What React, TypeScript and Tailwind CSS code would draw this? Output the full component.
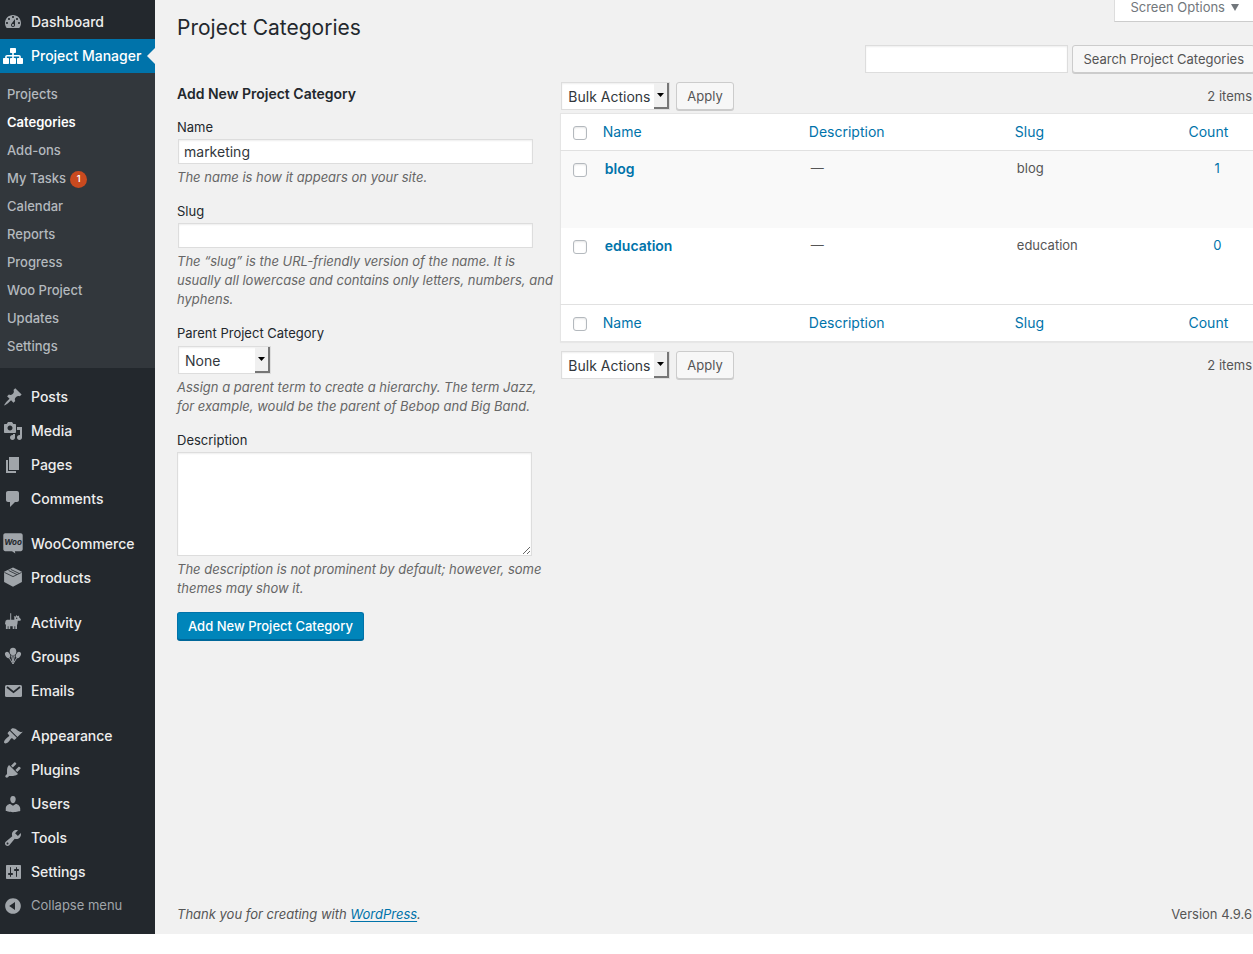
import { useState } from 'react'
import type { ReactNode } from 'react'
import clsx from 'clsx'

const SUBMENU = [
  { label: 'Projects' },
  { label: 'Categories', current: true },
  { label: 'Add-ons' },
  { label: 'My Tasks', badge: 1 },
  { label: 'Calendar' },
  { label: 'Reports' },
  { label: 'Progress' },
  { label: 'Woo Project' },
  { label: 'Updates' },
  { label: 'Settings' },
]

const ICONS: Record<string, ReactNode> = {
  dashboard: (
    <path d="M3.76 16h12.48c1.1-1.37 1.76-3.11 1.76-5 0-4.42-3.58-8-8-8s-8 3.58-8 8c0 1.89.66 3.63 1.76 5zM10 4c.55 0 1 .45 1 1s-.45 1-1 1-1-.45-1-1 .45-1 1-1zM6 6c.55 0 1 .45 1 1s-.45 1-1 1-1-.45-1-1 .45-1 1-1zm8 0c.55 0 1 .45 1 1s-.45 1-1 1-1-.45-1-1 .45-1 1-1zm-5.37 5.55L12 7v6c0 1.1-.9 2-2 2s-2-.9-2-2c0-.57.24-1.08.63-1.45zM4 10c.55 0 1 .45 1 1s-.45 1-1 1-1-.45-1-1 .45-1 1-1zm12 0c.55 0 1 .45 1 1s-.45 1-1 1-1-.45-1-1 .45-1 1-1zm-5 3c0-.55-.45-1-1-1s-1 .45-1 1 .45 1 1 1 1-.45 1-1z" />
  ),
  sitemap: (
    <path d="M8 2h4c.6 0 1 .4 1 1v3c0 .6-.4 1-1 1h-1.200v2H16c1 0 1.800.8 1.800 1.800V12H19c.6 0 1 .4 1 1v4c0 .6-.4 1-1 1h-4c-.6 0-1-.4-1-1v-4c0-.6.4-1 1-1h1.200v-1.400h-5.400V12H12c.6 0 1 .4 1 1v4c0 .6-.4 1-1 1H8c-.6 0-1-.4-1-1v-4c0-.6.4-1 1-1h1.200v-1.400H3.800V12H5c.6 0 1 .4 1 1v4c0 .6-.4 1-1 1H1c-.6 0-1-.4-1-1v-4c0-.6.4-1 1-1h1.200v-1.200C2.200 9.800 3 9 4 9h5.200V7H8c-.6 0-1-.4-1-1V3c0-.6.4-1 1-1z" />
  ),
  posts: (
    <path d="M10.44 3.02l1.82-1.82 6.36 6.35-1.83 1.82c-1.05-.68-2.48-.57-3.41.36l-.75.75c-.92.93-1.04 2.35-.35 3.41l-1.83 1.82-2.41-2.41-2.8 2.79c-.42.42-3.38 2.71-3.8 2.29s1.86-3.39 2.28-3.81l2.79-2.79L4.1 9.36l1.83-1.82c1.05.69 2.48.57 3.4-.36l.75-.75c.93-.92 1.05-2.35.36-3.41z" />
  ),
  media: (
    <path d="M13 11V4c0-.55-.45-1-1-1h-1.67L9 1H5L3.67 3H2c-.55 0-1 .45-1 1v7c0 .55.45 1 1 1h10c.55 0 1-.45 1-1zM7 4.5c1.38 0 2.5 1.12 2.5 2.5S8.38 9.5 7 9.5 4.5 8.38 4.5 7 5.62 4.5 7 4.5zM14 6h5v10.5c0 1.38-1.12 2.5-2.5 2.5S14 17.88 14 16.5s1.12-2.5 2.5-2.5c.17 0 .34.02.5.05V9h-3V6zm-4 8.05V13h2v3.5c0 1.38-1.12 2.5-2.5 2.5S7 17.88 7 16.5 8.12 14 9.5 14c.17 0 .34.02.5.05z" />
  ),
  pages: <path d="M6 15V2h10v13H6zm-1 1h8v2H3V5h2v11z" />,
  comments: (
    <path d="M5 2h9c1.1 0 2 .9 2 2v7c0 1.1-.9 2-2 2h-2l-5 5v-5H5c-1.1 0-2-.9-2-2V4c0-1.1.9-2 2-2z" />
  ),
  woo: (
    <>
      <path d="M2.200-.700h15.600c1 0 1.900.8 1.900 1.900v14.100c0 1-.9 1.900-1.900 1.900h-5.900l.4 2.200-3.300-2.200H2.200c-1 0-1.900-.9-1.900-1.900V1.200C.3.1 1.200-.7 2.200-.700z" />
      <text
        x="10"
        y="11"
        textAnchor="middle"
        className="fill-[#23282d] font-['Inter',sans-serif] text-[8px] font-bold italic"
      >
        Woo
      </text>
    </>
  ),
  products: (
    <>
      <path d="M10-.600l8.900 4.300v10.200L10 18.700 1.100 13.900V3.700z" />
      <path
        d="M1.400 4.400L10 8.600l8.600-4.200M5.600 2.500L14 6.600M7.800 1.400l8.400 4.100"
        className="fill-none stroke-[#23282d]"
        strokeWidth="0.8"
      />
    </>
  ),
  activity: (
    <path d="M7.200.2h1v6.500h3.100V4.600L10.800 3l1.700.8.8-1.800 1.200 1.300 1.600-.7v1.600l1.800 2-.5 1.600h-2.600l-.4 3.400-.4.800V16h-1.700v-2.700h-.9V16H9.700v-2.700H7.200V16H5.500v-2.700h-.8V16H2.900v-4L2 10.800l.6-3L4 6.700h3.200zM13.700 4.500a.7.7 0 1 0 0 1.400.7.7 0 0 0 0-1.400z" />
  ),
  groups: (
    <>
      <ellipse cx="10" cy="4.600" rx="3.300" ry="3.800" />
      <ellipse cx="4.600" cy="8" rx="2.300" ry="3.300" transform="rotate(-28 4.600 8)" />
      <ellipse cx="15.400" cy="8" rx="2.300" ry="3.300" transform="rotate(28 15.400 8)" />
      <path
        d="M10 8v9M6.200 10.800L10 17M13.800 10.800L10 17M8.300 8.300L10 15M11.700 8.300L10 15"
        className="fill-none stroke-[#a0a5aa]"
        strokeWidth="0.9"
      />
    </>
  ),
  emails: (
    <>
      <rect x="2" y="4" width="17" height="12" rx="1.500" />
      <path d="M4 6l6.500 5.200L17 6" className="fill-none stroke-[#23282d]" strokeWidth="1.800" />
    </>
  ),
  appearance: (
    <path d="M14.48 11.06L7.41 3.99l1.5-1.5c.5-.56 2.3-.47 3.51.32 1.21.8 1.43 1.28 2.91 2.1 1.18.64 2.45 1.26 4.45.85zm-.71.71L6.7 4.7 4.93 6.47c-.39.39-.39 1.02 0 1.41l1.06 1.06c.39.39.39 1.03 0 1.42-.6.6-1.43 1.11-2.21 1.69-.35.26-.7.53-1.01.84C1.43 14.23.4 16.08 1.4 17.07c.99 1 2.84-.03 4.18-1.36.31-.31.58-.66.85-1.02.57-.78 1.08-1.61 1.69-2.21.39-.39 1.02-.39 1.41 0l1.06 1.06c.39.39 1.02.39 1.41 0z" />
  ),
  plugins: (
    <path d="M13.11 4.36L9.87 7.6 8 5.73l3.24-3.24c.35-.34 1.05-.2 1.56.32.52.51.66 1.21.31 1.55zm-8 1.77l.91-1.12 9.01 9.01-1.19.84c-.71.71-2.63 1.16-3.82 1.16H6.14L4.9 17.26c-.59.59-1.54.59-2.12 0-.59-.58-.59-1.53 0-2.12l1.24-1.24v-3.88c0-1.13.4-3.19 1.09-3.89zm7.26 3.97l3.24-3.24c.34-.35 1.04-.21 1.55.31.52.51.66 1.21.31 1.55l-3.24 3.25z" />
  ),
  users: (
    <path d="M10 9.25c-2.27 0-2.73-3.44-2.73-3.44C7 4.02 7.82 2 9.97 2c2.16 0 2.98 2.02 2.71 3.81 0 0-.41 3.44-2.68 3.44zm0 2.57L12.72 10c2.39 0 4.52 2.33 4.52 4.53v2.49s-3.65 1.13-7.24 1.13c-3.65 0-7.24-1.13-7.24-1.13v-2.49c0-2.25 1.94-4.48 4.47-4.48z" />
  ),
  tools: (
    <path d="M16.68 9.77c-1.34 1.34-3.3 1.67-4.95.99l-5.41 6.52c-.99.99-2.59.99-3.58 0s-.99-2.59 0-3.57l6.52-5.42c-.68-1.65-.35-3.61.99-4.95 1.28-1.28 3.12-1.62 4.72-1.06l-2.89 2.89 2.82 2.82 2.86-2.87c.53 1.58.18 3.39-1.08 4.65zM3.81 16.21c.4.39 1.04.39 1.43 0 .4-.4.4-1.04 0-1.43-.39-.4-1.03-.4-1.43 0-.39.39-.39 1.03 0 1.43z" />
  ),
  settings: (
    <path d="M18 16V4c0-.600-.400-1-1-1H4c-.600 0-1 .400-1 1v12c0 .600.400 1 1 1h13c.600 0 1-.400 1-1zM8 11h1c.55 0 1 .45 1 1s-.45 1-1 1H8v1.5c0 .28-.22.5-.5.5s-.5-.22-.5-.5V13H6c-.55 0-1-.45-1-1s.45-1 1-1h1V5.5c0-.28.22-.5.5-.5s.5.22.5.5V11zm5-2h-1c-.55 0-1-.45-1-1s.45-1 1-1h1V5.5c0-.28.22-.5.5-.5s.5.22.5.5V7h1c.55 0 1 .45 1 1s-.45 1-1 1h-1v5.5c0 .28-.22.5-.5.5s-.5-.22-.5-.5V9z" />
  ),
  collapse: (
    <path d="M10 2.16c4.33 0 7.84 3.51 7.84 7.84s-3.51 7.84-7.84 7.84S2.16 14.33 2.16 10 5.71 2.16 10 2.16zm2 11.72V6.12L6.18 9.97z" />
  ),
}

const MENU_GROUPS = [
  [
    { label: 'Posts', icon: 'posts' },
    { label: 'Media', icon: 'media' },
    { label: 'Pages', icon: 'pages' },
    { label: 'Comments', icon: 'comments' },
  ],
  [
    { label: 'WooCommerce', icon: 'woo' },
    { label: 'Products', icon: 'products' },
  ],
  [
    { label: 'Activity', icon: 'activity' },
    { label: 'Groups', icon: 'groups' },
    { label: 'Emails', icon: 'emails' },
  ],
  [
    { label: 'Appearance', icon: 'appearance' },
    { label: 'Plugins', icon: 'plugins' },
    { label: 'Users', icon: 'users' },
    { label: 'Tools', icon: 'tools' },
    { label: 'Settings', icon: 'settings' },
  ],
]

const CATEGORIES = [
  { name: 'blog', slug: 'blog', count: 1 },
  { name: 'education', slug: 'education', count: 0 },
]

const inputClass =
  'border border-[#ddd] bg-white text-sm text-[#32373c] shadow-[inset_0_1px_2px_rgba(0,0,0,0.07)]'

function MenuIcon({ name, active }: { name: string; active?: boolean }) {
  return (
    <svg
      viewBox="0 0 20 20"
      aria-hidden="true"
      className={clsx('size-5 shrink-0 overflow-visible', active ? 'fill-white' : 'fill-[#a0a5aa]')}
    >
      {ICONS[name]}
    </svg>
  )
}

function MenuItem({ label, icon, active }: { label: string; icon: string; active?: boolean }) {
  return (
    <a
      href="#"
      className={clsx(
        'relative flex h-[34px] items-center gap-2 pl-[3px] text-sm font-medium',
        active ? 'bg-[#0073aa] text-white' : 'text-[#eee] hover:text-[#00b9eb]',
      )}
    >
      <MenuIcon name={icon} active={active} />
      <span className="whitespace-nowrap">{label}</span>
      {active && (
        <span className="absolute inset-y-0 right-0 my-auto size-0 border-8 border-transparent border-r-[#f1f1f1]" />
      )}
    </a>
  )
}

function Sidebar() {
  return (
    <nav className="w-[155px] shrink-0 bg-[#23282d] pt-[5px] pb-[11px]">
      <MenuItem label="Dashboard" icon="dashboard" />
      <MenuItem label="Project Manager" icon="sitemap" active />
      <ul className="bg-[#32373c] pt-2 pb-[7px]">
        {SUBMENU.map((item) => (
          <li key={item.label}>
            <a
              href="#"
              className={clsx(
                'flex h-7 items-center gap-1 pl-[7px] text-[13px]',
                item.current ? 'font-semibold text-white' : 'font-medium text-[#b4b9be]',
              )}
            >
              {item.label}
              {item.badge && (
                <span className="flex size-[17px] items-center justify-center rounded-full bg-[#ca4a1f] text-[9px] font-semibold text-white">
                  {item.badge}
                </span>
              )}
            </a>
          </li>
        ))}
      </ul>
      <div className="flex flex-col gap-[11px] pt-3">
        {MENU_GROUPS.map((group) => (
          <div key={group[0].label}>
            {group.map((item) => (
              <MenuItem key={item.label} label={item.label} icon={item.icon} />
            ))}
          </div>
        ))}
      </div>
      <button
        type="button"
        className="flex h-[34px] w-full items-center gap-2 pl-[3px] text-[13px] text-[#a0a5aa]"
      >
        <MenuIcon name="collapse" />
        Collapse menu
      </button>
    </nav>
  )
}

function Select({
  id,
  label,
  option,
  className,
}: {
  id: string
  label?: string
  option: string
  className: string
}) {
  return (
    <span className={clsx('relative block', className)}>
      <select
        id={id}
        aria-label={label}
        className={clsx(inputClass, 'block h-7 w-full appearance-none pt-px pl-1.5')}
      >
        <option>{option}</option>
      </select>
      {/* Beveled drop-down handle */}
      <span className="pointer-events-none absolute inset-y-px right-px flex w-[15px] items-center justify-center border-r-2 border-b-2 border-[#767676] bg-[#f0f0f0]">
        <svg viewBox="0 0 7 4" className="h-1 w-[7px] fill-black" aria-hidden="true">
          <path d="M0 0h7L3.500 4z" />
        </svg>
      </span>
    </span>
  )
}

function Button({ children }: { children: ReactNode }) {
  return (
    <button
      type="button"
      className="h-7 shrink-0 rounded-[3px] border border-[#ccc] bg-[#f7f7f7] px-2.5 pt-0.5 text-[13px] whitespace-nowrap text-[#555] shadow-[0_1px_0_#ccc]"
    >
      {children}
    </button>
  )
}

function Field({
  id,
  label,
  help,
  children,
}: {
  id: string
  label: string
  help: string
  children: ReactNode
}) {
  return (
    <div>
      <label htmlFor={id} className="block pb-0.5 text-[#23282d]">
        {label}
      </label>
      {children}
      <p className="mt-1 text-[#666] italic">{help}</p>
    </div>
  )
}

function AddCategoryForm() {
  const [name, setName] = useState('marketing')

  return (
    <form className="text-[13px] leading-[19px]" onSubmit={(e) => e.preventDefault()}>
      <h2 className="pt-0.5 text-sm leading-5 font-semibold text-[#23282d]">
        Add New Project Category
      </h2>
      <div className="mt-3.5 flex flex-col gap-[15px]">
        <Field id="tag-name" label="Name" help="The name is how it appears on your site.">
          <input
            id="tag-name"
            type="text"
            value={name}
            onChange={(e) => setName(e.target.value)}
            className={clsx(inputClass, 'mx-px block h-[25px] w-[94%] px-[5px]')}
          />
        </Field>
        <Field
          id="tag-slug"
          label="Slug"
          help="The “slug” is the URL-friendly version of the name. It is usually all lowercase and contains only letters, numbers, and hyphens."
        >
          <input
            id="tag-slug"
            type="text"
            className={clsx(inputClass, 'mx-px block h-[25px] w-[94%] px-[5px]')}
          />
        </Field>
        <Field
          id="parent"
          label="Parent Project Category"
          help="Assign a parent term to create a hierarchy. The term Jazz, for example, would be the parent of Bebop and Big Band."
        >
          <Select id="parent" option="None" className="mx-px mt-px w-[93px]" />
        </Field>
        <Field
          id="tag-description"
          label="Description"
          help="The description is not prominent by default; however, some themes may show it."
        >
          <textarea
            id="tag-description"
            className={clsx(inputClass, 'block h-[104px] w-[94%] resize px-1.5 py-0.5')}
          />
        </Field>
      </div>
      <button
        type="submit"
        className="mt-3.5 h-7 rounded-[3px] border border-[#0073aa] border-b-[#006799] bg-[#0085ba] px-2.5 text-[13px] font-medium whitespace-nowrap text-white shadow-[0_1px_0_#006799]"
      >
        Add New Project Category
      </button>
    </form>
  )
}

function Checkbox({ label }: { label: string }) {
  return (
    <input
      type="checkbox"
      aria-label={label}
      className="block size-3.5 appearance-none rounded-[3px] border border-[#b4b9be] bg-white shadow-[inset_0_1px_2px_rgba(0,0,0,0.1)] checked:bg-[#0073aa]"
    />
  )
}

function TableNav({ id }: { id: string }) {
  return (
    <div className="flex h-7 items-center">
      <Select id={id} label="Select bulk action" option="Bulk Actions" className="ml-px w-[109px]" />
      <div className="ml-1.5 flex">
        <Button>Apply</Button>
      </div>
      <span className="ml-auto pt-0.5 pr-[3px] text-[13px] whitespace-nowrap text-[#555]">
        2 items
      </span>
    </div>
  )
}

function HeadingRow({ label }: { label: string }) {
  return (
    <tr className="h-[37px] text-left text-[#0073aa]">
      <td className="w-[34px] pt-0.5 pl-3">
        <Checkbox label={label} />
      </td>
      <th scope="col" className="w-[29.7%] pl-2 font-normal">
        <a href="#">Name</a>
      </th>
      <th scope="col" className="w-[29.7%] pl-2 font-normal">
        <a href="#">Description</a>
      </th>
      <th scope="col" className="pl-2 font-normal">
        <a href="#">Slug</a>
      </th>
      <th scope="col" className="w-[74px] pl-2 font-normal">
        <a href="#">Count</a>
      </th>
    </tr>
  )
}

function CategoryTable() {
  return (
    <table className="my-[3px] w-full table-fixed border border-[#e5e5e5] bg-white text-sm shadow-[0_1px_1px_rgba(0,0,0,0.04)]">
      <thead className="border-b border-[#e1e1e1]">
        <HeadingRow label="Select all" />
      </thead>
      <tbody className="text-[13px] text-[#555]">
        {CATEGORIES.map((category) => (
          <tr key={category.name} className="h-[77px] align-top odd:bg-[#f9f9f9]">
            <td className="pt-3 pl-3">
              <Checkbox label={`Select ${category.name}`} />
            </td>
            <td className="px-2.5 pt-2 text-sm font-semibold text-[#0073aa]">
              <a href="#">{category.name}</a>
            </td>
            <td className="px-2.5 pt-2">—</td>
            <td className="px-2.5 pt-2">{category.slug}</td>
            <td className="pt-2 text-center text-[#0073aa]">
              <a href="#">{category.count}</a>
            </td>
          </tr>
        ))}
      </tbody>
      <tfoot className="border-t border-[#e1e1e1]">
        <HeadingRow label="Select all rows" />
      </tfoot>
    </table>
  )
}

export default function App() {
  return (
    <div className="flex overflow-hidden bg-[#f1f1f1] font-['Inter','Liberation_Sans',sans-serif] text-[#444]">
      <Sidebar />
      <main className="-mr-0.5 flex min-w-0 flex-1 flex-col pl-[22px]">
        <div className="flex h-[45px] items-start justify-between">
          <h1 className="pt-3.5 text-[21px] leading-7 text-[#23282d]">Project Categories</h1>
          <button
            type="button"
            className="flex h-[22px] items-center gap-1.5 border border-t-0 border-[#ddd] border-b-[#ccc] bg-white px-[15px] pb-1.5 text-[13px] text-[#72777c]"
          >
            Screen Options
            <svg viewBox="0 0 8 7" className="h-[7px] w-2 fill-[#72777c]" aria-hidden="true">
              <path d="M0 0h8L4 7z" />
            </svg>
          </button>
        </div>

        <form className="flex justify-end gap-1" onSubmit={(e) => e.preventDefault()}>
          <input
            type="search"
            aria-label="Search Project Categories"
            className={clsx(inputClass, 'h-7 w-[203px] px-1.5')}
          />
          <Button>Search Project Categories</Button>
        </form>

        <div className="mt-[9px] flex flex-1">
          <div className="w-[35%] shrink-0">
            <AddCategoryForm />
          </div>
          <div className="min-w-0 flex-1 pl-1.5">
            <TableNav id="bulk-action-top" />
            <CategoryTable />
            <div className="pt-1.5">
              <TableNav id="bulk-action-bottom" />
            </div>
          </div>
        </div>

        <footer className="flex justify-between pr-[3px] pb-2.5 text-[13px] leading-5 text-[#555]">
          <p className="italic">
            Thank you for creating with{' '}
            <a href="#" className="text-[#0073aa] underline underline-offset-2">
              WordPress
            </a>
            .
          </p>
          <p>Version 4.9.6</p>
        </footer>
      </main>
    </div>
  )
}
